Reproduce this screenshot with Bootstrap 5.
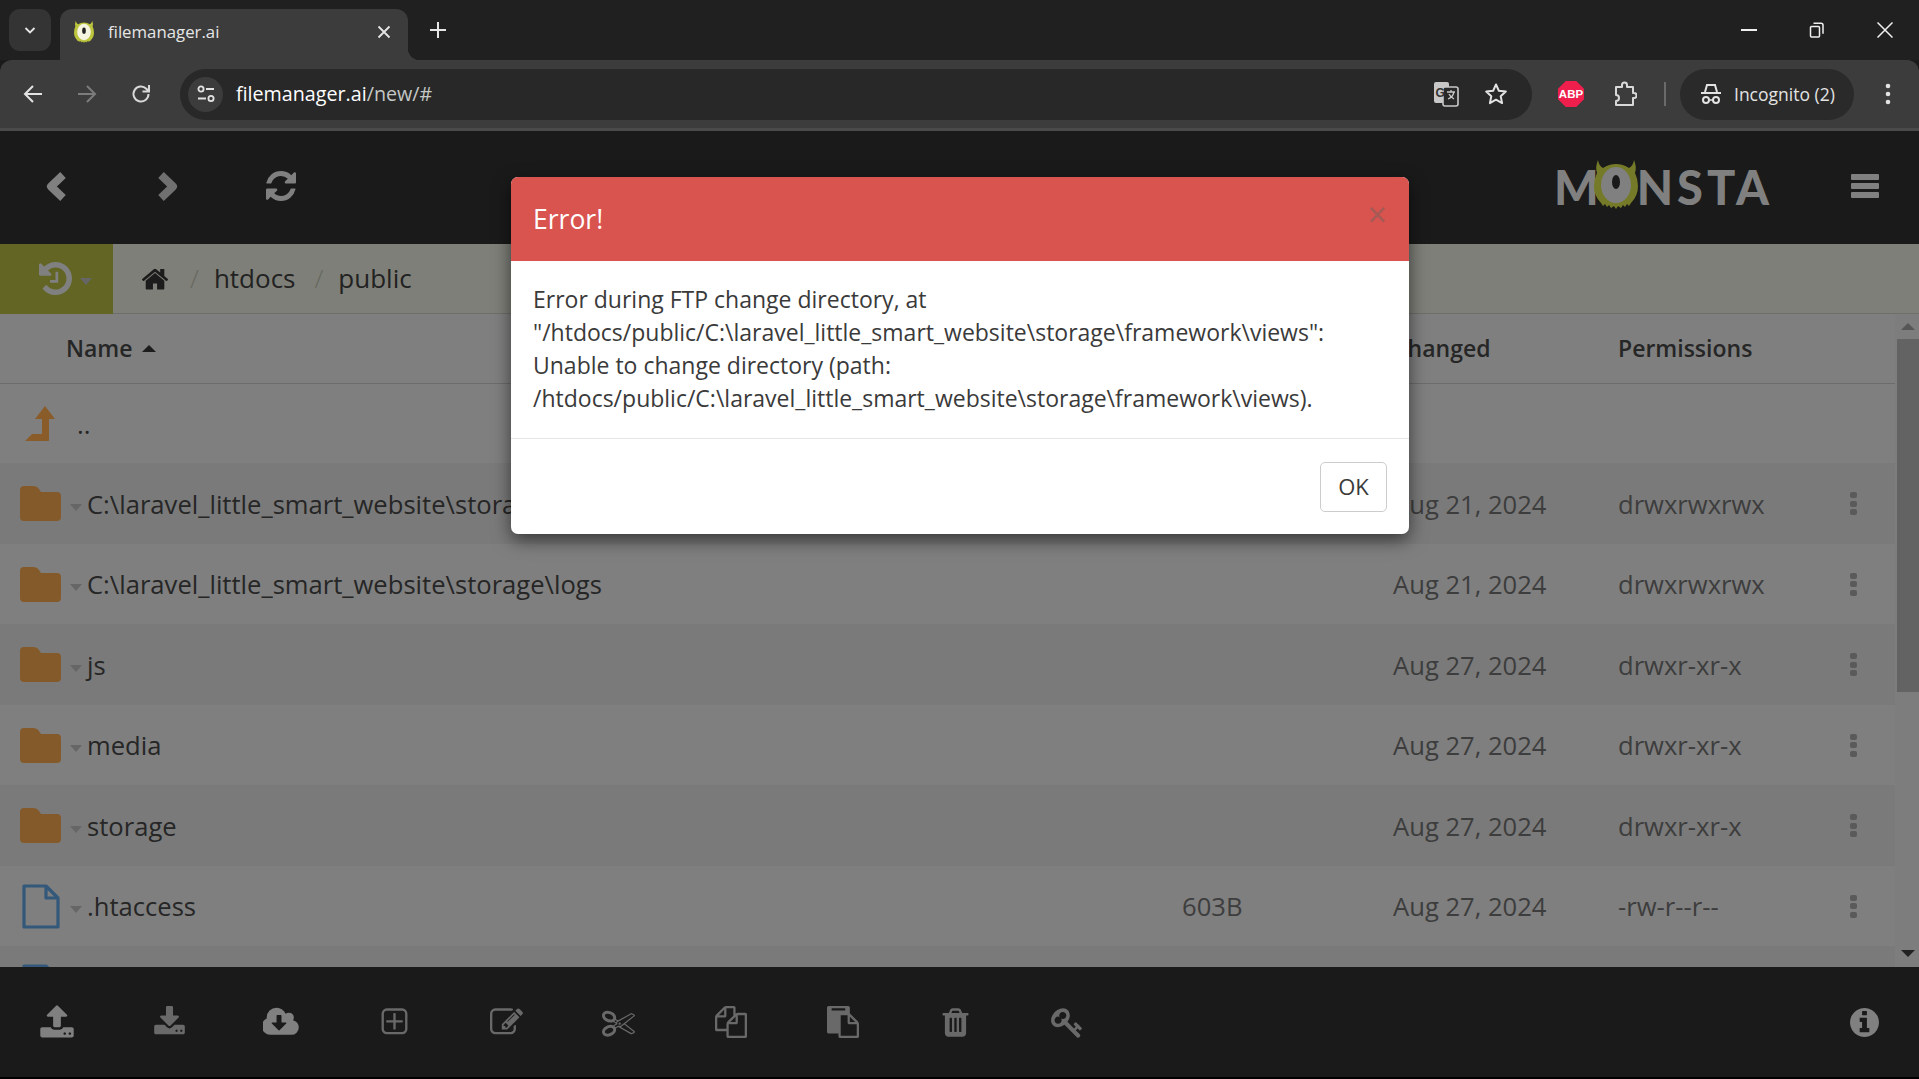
<!DOCTYPE html>
<html lang="en">

<head>
    <meta charset="utf-8">
    <title>filemanager.ai</title>
    <link href="https://cdn.jsdelivr.net/npm/bootstrap@5.3.2/dist/css/bootstrap.min.css" rel="stylesheet">
    <script src="https://cdn.jsdelivr.net/npm/bootstrap@5.3.2/dist/js/bootstrap.bundle.min.js"></script>

    <style>
        html, body { height: 100%; }
        body {
            height: 1079px;
            overflow: hidden;
            background: #1a1a1a;
            font-family: "Open Sans", "Liberation Sans", sans-serif;
        }
        svg { display: block; flex: none; }

        /* browser frame */
        .tab-strip { height: 60px; background: #202020; padding-left: 9px; color: #e6e6e6; }
        .tab-list { width: 42px; height: 42px; margin-top: 9px; border-radius: 11px; background: #343434; }
        .tab-item {
            position: relative;
            width: 348px; height: 51px;
            margin: 9px 0 0 9px;
            padding: 0 17px 6px 14px;
            background: #3c3c3c;
            border-radius: 12px 12px 0 0;
            font-size: 16.8px;
        }
        .tab-item::after {
            content: "";
            position: absolute;
            right: -12px; bottom: 0;
            width: 12px; height: 12px;
            background: radial-gradient(circle at 100% 0, #202020 12px, #3c3c3c 12.5px);
        }
        .tab-title { margin-left: 14px; }
        .tab-icon { color: #bcc53d; --eye-w: #f4f4e0; --eye-p: #222; }
        .tab-new { height: 42px; margin: 9px 0 0 22px; }
        .win-btn { width: 68px; height: 60px; }
        .tool-bar {
            height: 71px;
            background: #3c3c3c;
            border-bottom: 3px solid #4a4a4a;
            border-radius: 12px 12px 0 0;
            color: #e3e3e3;
        }
        .tool-first { margin-left: 6px; }
        .tool-btn { width: 54px; height: 51px; }
        .omni {
            width: 1352px; height: 51px;
            margin-left: 12px;
            background: #282828;
            border-radius: 26px;
            padding-left: 8px;
        }
        .omni-chip { width: 35px; height: 35px; border-radius: 50%; background: #3c3c3c; }
        .omni-url { margin-left: 13px; font-size: 19.7px; color: #fff; }
        .omni-url span { color: #c4c7c5; }
        .omni-end { margin-left: auto; padding-right: 24px; gap: 25px; }
        .abp-badge {
            width: 26px; height: 26px;
            margin-left: 26px;
            background: #ee1f4c;
            clip-path: polygon(30% 0, 70% 0, 100% 30%, 100% 70%, 70% 100%, 30% 100%, 0 70%, 0 30%);
            color: #fff;
            font: 700 11.5px "Liberation Sans", sans-serif;
        }
        .puzzle-btn { margin-left: 29px; }
        .bar-sep { width: 2px; height: 24px; margin: 0 14px 0 27px; background: #6a6a6a; }
        .incog-pill {
            width: 174px; height: 51px;
            padding-left: 20px;
            gap: 12px;
            background: #2a2a2a;
            border-radius: 26px;
            font-size: 17.5px;
            white-space: nowrap;
        }
        .more-btn { padding-right: 28px; }

        /* app */
        .app-main { height: 948px; }
        .app-top { height: 113px; background: #1a1a1a; color: #808080; flex: none; }
        .app-btn { width: 112.3px; margin-top: -3px; }
        .logo-box { margin-right: 78px; color: #808080; }
        .logo-text { font: 900 47px/1 "Lato", sans-serif; letter-spacing: 1px; }
        .logo-rest { letter-spacing: 4px; }
        .logo-eye { margin: -6px -1px 0 -6px; color: #757a28; --eye-w: #808080; --eye-p: #1a1a1a; }
        .menu-bars { width: 28px; margin-right: 40px; }
        .menu-bars i { display: block; height: 6px; margin-bottom: 3px; background: #808080; border-radius: 1px; }
        .crumb-bar {
            height: 70px;
            flex: none;
            background: #7e7f78;
            border-bottom: 1px solid #6e6f6a;
            font-size: 26px;
            color: #222;
        }
        .crumb-hist { width: 113px; height: 70px; background: #626524; padding-left: 39px; gap: 8px; color: #808080; }
        .hist-caret { border-top-color: #808080; }
        .crumb-sep { color: #676860; margin: 0 15px 0 19px; font-weight: 300; }
        .crumb-home { margin-left: 29px; margin-right: 3px; color: #1c1c1c; }

        .list-wrap { min-height: 0; background: #7f7f7f; }
        .file-pane { width: 1895px; overflow: hidden; color: #3d3d3d; font-size: 25.6px; }
        .list-cols {
            display: grid;
            grid-template-columns: 1182px 211px 225px 222px 26px;
            align-items: center;
        }
        .list-head { height: 70px; border-bottom: 1px solid #6c6c6c; color: #262626; font-size: 23px; font-weight: 600; flex: none; }
        .head-name { padding-left: 66px; }
        .file-row { height: 80.5px; flex: none; padding-top: 3px; }
        .file-row.shade { background: #7a7a7a; }
        .parent-row { height: 79px; }
        .name-cell { display: flex; align-items: center; min-width: 0; white-space: nowrap; color: #262626; }
        .name-icon { width: 70px; padding-left: 20px; margin-top: -2px; flex: none; }
        .name-icon.for-file { padding-left: 22px; }
        .name-icon.for-up { padding-left: 25px; }
        .up-dots { margin-left: 7px; }
        .drop-caret { width: 0; height: 0; border: 6px solid transparent; border-top: 7px solid #666; border-bottom: 0; margin: 5px 5px 0 0; flex: none; }
        .sort-caret { width: 0; height: 0; border: 7px solid transparent; border-bottom: 7px solid #1d1d1d; border-top: 0; margin-left: 9px; }
        .dot-col { width: 7px; margin: 0 auto; }
        .dot-col i { display: block; height: 6px; margin-bottom: 2.5px; background: #5a5a5a; border-radius: 2px; }
        .scroll-track { width: 24px; background: #7d7d7d; padding-left: 2px; }
        .scroll-arrow { width: 0; height: 0; border: 7px solid transparent; margin: 0 auto; }
        .scroll-arrow.up { border-bottom: 7px solid #565656; border-top: 0; margin-top: 9px; }
        .scroll-arrow.down { border-top: 7px solid #222; border-bottom: 0; margin-bottom: 10px; }
        .scroll-thumb { height: 353px; margin-top: 9px; background: #636363; }

        .app-foot { height: 112px; flex: none; background: #1a1a1a; border-bottom: 2px solid #000; padding-left: 1px; }
        .foot-btn { width: 112.3px; height: 36px; color: #696969; }
        .foot-btn.lit { color: #808080; }
        .foot-info { margin-left: auto; width: 109px; color: #808080; }

        /* error dialog */
        .err-layer { position: absolute; inset: 0; z-index: 10; top: 46px; }
        .err-dialog {
            width: 898px;
            margin-left: 511px;
            background: #fff;
            border: 0;
            border-radius: 7px;
            box-shadow: 0 6px 18px rgba(0, 0, 0, .55);
            font-size: 23px;
            color: #3a3a3a;
        }
        .err-head {
            height: 84px;
            padding: 0 22px;
            background: #d9534f;
            color: #fff;
            border: 0;
            border-radius: 7px 7px 0 0;
        }
        .err-title { font-size: 26.5px; line-height: 1; margin: 0; }
        .err-close { margin: -10px 0 0 auto; color: #a55a56; font-size: 34px; line-height: 1; }
        .err-body { height: 177px; padding: 22px 22px; line-height: 33px; }
        .err-foot { height: 96px; padding: 0 22px; border-top: 1px solid #e5e5e5; }
        .err-ok {
            width: 67px; height: 50px;
            margin: 0;
            padding: 0;
            background: #fff;
            border: 1px solid #ccc;
            border-radius: 5px;
            color: #3a3a3a;
            font-size: 22px;
        }
    </style>
</head>

<body class="m-0">

    <svg width="0" height="0" class="position-absolute">
        <symbol id="i-refresh" viewBox="128 128 1536 1536"><path d="M1639 1056q0 5-1 7-64 268-268 434.5t-478 166.5q-146 0-282.5-55t-243.5-157l-129 129q-19 19-45 19t-45-19-19-45v-448q0-26 19-45t45-19h448q26 0 45 19t19 45-19 45l-137 137q71 66 161 102t187 36q134 0 250-65t186-179q11-17 53-117 8-23 30-23h192q13 0 22.5 9.5t9.5 22.5zm25-800v448q0 26-19 45t-45 19h-448q-26 0-45-19t-19-45 19-45l138-138q-148-137-349-137-134 0-250 65t-186 179q-11 17-53 117-8 23-30 23h-199q-13 0-22.5-9.5t-9.5-22.5v-7q65-268 270-434.5t480-166.5q146 0 284 55.5t245 156.5l130-129q19-19 45-19t45 19 19 45z" fill="currentColor"/></symbol>
        <symbol id="i-home" viewBox="90 200 1610 1360"><path d="M1472 992v480q0 26-19 45t-45 19h-384v-384h-256v384h-384q-26 0-45-19t-19-45v-480q0-1 .5-3t.5-3l575-474 575 474q1 2 1 6zm223-69l-62 74q-8 9-21 11h-3q-13 0-21-7l-692-577-692 577q-12 8-24 7-13-2-21-11l-62-74q-8-10-7-23.5t11-21.5l719-599q32-26 76-26t76 26l244 204v-195q0-14 9-23t23-9h192q14 0 23 9t9 23v408l219 182q10 8 11 21.5t-7 23.5z" fill="currentColor"/></symbol>
        <symbol id="i-history" viewBox="128 128 1536 1536"><path d="M1664 896q0 156-61 298t-164 245-245 164-298 61q-172 0-327-72.5t-264-204.5q-7-10-6.5-22.5t8.5-20.5l137-138q10-9 25-9 16 2 23 12 73 95 179 147t225 52q104 0 198.5-40.5t163.5-109.5 109.5-163.5 40.5-198.5-40.5-198.5-109.5-163.5-163.5-109.5-198.5-40.5q-98 0-188 35.5t-160 101.5l137 138q31 30 14 69-17 40-59 40h-448q-26 0-45-19t-19-45v-448q0-42 40-59 39-17 69 14l130 129q107-101 244.5-156.5t284.5-55.5q156 0 298 61t245 164 164 245 61 298zm-640-288v448q0 14-9 23t-23 9h-320q-14 0-23-9t-9-23v-64q0-14 9-23t23-9h224v-352q0-14 9-23t23-9h64q14 0 23 9t9 23z" fill="currentColor"/></symbol>
        <symbol id="i-upload" viewBox="0 0 1792 1792"><path d="M1344 1472q0-26-19-45t-45-19-45 19-19 45 19 45 45 19 45-19 19-45zm256 0q0-26-19-45t-45-19-45 19-19 45 19 45 45 19 45-19 19-45zm128-224v320q0 40-28 68t-68 28h-1472q-40 0-68-28t-28-68v-320q0-40 28-68t68-28h427q21 56 70.5 92t110.5 36h256q61 0 110.5-36t70.5-92h427q40 0 68 28t28 68zm-325-648q-17 40-59 40h-256v448q0 26-19 45t-45 19h-256q-26 0-45-19t-19-45v-448h-256q-42 0-59-40-17-39 14-69l448-448q18-19 45-19t45 19l448 448q31 30 14 69z" fill="currentColor"/></symbol>
        <symbol id="i-download" viewBox="0 0 1792 1792"><path d="M1344 1344q0-26-19-45t-45-19-45 19-19 45 19 45 45 19 45-19 19-45zm256 0q0-26-19-45t-45-19-45 19-19 45 19 45 45 19 45-19 19-45zm128-224v320q0 40-28 68t-68 28h-1472q-40 0-68-28t-28-68v-320q0-40 28-68t68-28h465l135 136q58 56 136 56t136-56l136-136h464q40 0 68 28t28 68zm-325-569q17 41-14 70l-448 448q-18 19-45 19t-45-19l-448-448q-31-29-14-70 17-39 59-39h256v-448q0-26 19-45t45-19h256q26 0 45 19t19 45v448h256q42 0 59 39z" fill="currentColor"/></symbol>
        <symbol id="i-cloud" viewBox="0 0 1920 1792"><path d="M1216 928q0-14-9-23t-23-9h-224v-352q0-13-9.5-22.5t-22.5-9.5h-192q-13 0-22.5 9.5t-9.5 22.5v352h-224q-13 0-22.5 9.5t-9.5 22.5q0 14 9 23l352 352q9 9 23 9t23-9l351-351q10-12 10-24zm640 224q0 159-112.5 271.5t-271.5 112.5h-1088q-185 0-316.5-131.5t-131.5-316.5q0-130 70-240t188-165q-2-30-2-43 0-212 150-362t362-150q156 0 285.5 87t188.5 231q71-62 166-62 106 0 181 75t75 181q0 76-41 138 130 31 213.5 135.5t83.5 238.5z" fill="currentColor"/></symbol>
        <symbol id="i-plus" viewBox="0 0 1792 1792"><path d="M1344 800v64q0 14-9 23t-23 9h-352v352q0 14-9 23t-23 9h-64q-14 0-23-9t-9-23v-352h-352q-14 0-23-9t-9-23v-64q0-14 9-23t23-9h352v-352q0-14 9-23t23-9h64q14 0 23 9t9 23v352h352q14 0 23 9t9 23zm128 448v-832q0-66-47-113t-113-47h-832q-66 0-113 47t-47 113v832q0 66 47 113t113 47h832q66 0 113-47t47-113zm128-832v832q0 119-84.5 203.5t-203.5 84.5h-832q-119 0-203.5-84.5t-84.5-203.5v-832q0-119 84.5-203.5t203.5-84.5h832q119 0 203.5 84.5t84.5 203.5z" fill="currentColor"/></symbol>
        <symbol id="i-edit" viewBox="0 0 1792 1792"><path d="M888 1184l116-116-152-152-116 116v56h96v96h56zm440-720q-16-16-33 1l-350 350q-17 17-1 33t33-1l350-350q17-17 1-33zm80 594v190q0 119-84.5 203.5t-203.5 84.5h-832q-119 0-203.5-84.5t-84.5-203.5v-832q0-119 84.5-203.5t203.5-84.5h832q63 0 117 25 15 7 18 23 3 17-9 29l-49 49q-14 14-32 8-23-6-45-6h-832q-66 0-113 47t-47 113v832q0 66 47 113t113 47h832q66 0 113-47t47-113v-126q0-13 9-22l64-64q15-15 35-7t20 29zm-96-738l288 288-672 672h-288v-288zm444 132l-92 92-288-288 92-92q28-28 68-28t68 28l152 152q28 28 28 68t-28 68z" fill="currentColor"/></symbol>
        <symbol id="i-cut" viewBox="0 0 1792 1792"><path d="M960 896q26 0 45 19t19 45-19 45-45 19-45-19-19-45 19-45 45-19zm300 64l507 398q28 20 25 56-5 35-35 51l-128 64q-13 7-29 7-17 0-31-8l-690-387-110 66q-8 4-12 5 14 49 10 97-7 77-56 147.5t-132 123.5q-132 84-277 84-136 0-222-78-90-84-79-207 7-76 56-147t131-124q132-84 278-84 83 0 151 31 9-13 22-22l122-73-122-73q-13-9-22-22-68 31-151 31-146 0-278-84-82-53-131-124t-56-147q-5-59 15.5-113t63.5-93q85-79 222-79 145 0 277 84 83 52 132 123t56 148q4 48-10 97 4 1 12 5l110 66 690-387q14-8 31-8 16 0 29 7l128 64q30 16 35 51 3 36-25 56zm-681-260q46-42 21-108t-106-117q-92-59-192-59-74 0-113 36-46 42-21 108t106 117q92 59 192 59 74 0 113-36zm-85 745q81-51 106-117t-21-108q-39-36-113-36-100 0-192 59-81 51-106 117t21 108q39 36 113 36 100 0 192-59zm178-613l96 58v-11q0-36 33-56l14-8-79-47-26 26q-3 3-10 11t-12 12q-2 2-4 3.5t-3 2.5zm224 224l96 32 736-576-128-64-768 431v113l-160 96 9 8q2 2 7 6 4 4 11 12t11 12l26 26zm704 416l128-64-520-408-177 138q-2 3-13 7z" fill="currentColor"/></symbol>
        <symbol id="i-copy" viewBox="0 0 1792 1792"><path d="M1696 384q40 0 68 28t28 68v1216q0 40-28 68t-68 28h-960q-40 0-68-28t-28-68v-288h-544q-40 0-68-28t-28-68v-672q0-40 20-88t48-76l408-408q28-28 76-48t88-20h416q40 0 68 28t28 68v328q68-40 128-40h416zm-544 213l-299 299h299v-299zm-640-384l-299 299h299v-299zm196 647l316-316v-416h-384v416q0 40-28 68t-68 28h-416v640h512v-256q0-40 20-88t48-76zm956 804v-1152h-384v416q0 40-28 68t-68 28h-416v640h896z" fill="currentColor"/></symbol>
        <symbol id="i-paste" viewBox="0 0 1792 1792"><path d="M768 1664h896v-640h-416q-40 0-68-28t-28-68v-416h-384v1152zm256-1440v-64q0-13-9.5-22.5t-22.5-9.5h-704q-13 0-22.5 9.5t-9.5 22.5v64q0 13 9.5 22.5t22.5 9.5h704q13 0 22.5-9.5t9.5-22.5zm256 672h299l-299-299v299zm512 128v672q0 40-28 68t-68 28h-960q-40 0-68-28t-28-68v-160h-544q-40 0-68-28t-28-68v-1344q0-40 28-68t68-28h1088q40 0 68 28t28 68v328q21 13 36 28l408 408q28 28 48 76t20 88z" fill="currentColor"/></symbol>
        <symbol id="i-trash" viewBox="0 0 1792 1792"><path d="M704 1376v-704q0-14-9-23t-23-9h-64q-14 0-23 9t-9 23v704q0 14 9 23t23 9h64q14 0 23-9t9-23zm256 0v-704q0-14-9-23t-23-9h-64q-14 0-23 9t-9 23v704q0 14 9 23t23 9h64q14 0 23-9t9-23zm256 0v-704q0-14-9-23t-23-9h-64q-14 0-23 9t-9 23v704q0 14 9 23t23 9h64q14 0 23-9t9-23zm-544-992h448l-48-117q-7-9-17-11h-317q-10 2-17 11zm928 32v64q0 14-9 23t-23 9h-96v948q0 83-47 143.5t-113 60.5h-832q-66 0-113-58.5t-47-141.5v-952h-96q-14 0-23-9t-9-23v-64q0-14 9-23t23-9h309l70-167q15-37 54-63t79-26h320q40 0 79 26t54 63l70 167h309q14 0 23 9t9 23z" fill="currentColor"/></symbol>
        <symbol id="i-key" viewBox="0 0 1792 1792"><path d="M832 512q0-80-56-136t-136-56-136 56-56 136q0 42 19 83-41-19-83-19-80 0-136 56t-56 136 56 136 136 56 136-56 56-136q0-42-19-83 41 19 83 19 80 0 136-56t56-136zm851 704q0 17-49 66t-66 49q-9 0-28.5-16t-36.5-33-38.5-40-24.5-26l-96 96 220 220q28 28 28 68 0 42-39 81t-81 39q-40 0-68-28l-671-671q-176 131-365 131-163 0-265.5-102.5t-102.5-265.5q0-160 95-313t248-248 313-95q163 0 265.5 102.5t102.5 265.5q0 189-131 365l355 355 96-96q-3-3-26-24.5t-40-38.5-33-36.5-16-28.5q0-17 49-66t66-49q13 0 23 10 6 6 46 44.5t82 79.5 86.5 86 73 78 28.5 41z" fill="currentColor"/></symbol>
        <symbol id="i-info" viewBox="128 128 1536 1536"><path d="M1152 1376v-160q0-14-9-23t-23-9h-96v-512q0-14-9-23t-23-9h-320q-14 0-23 9t-9 23v160q0 14 9 23t23 9h96v320h-96q-14 0-23 9t-9 23v160q0 14 9 23t23 9h448q14 0 23-9t9-23zm-128-896v-160q0-14-9-23t-23-9h-192q-14 0-23 9t-9 23v160q0 14 9 23t23 9h192q14 0 23-9t9-23zm640 416q0 209-103 385.5t-279.5 279.5-385.5 103-385.5-103-279.5-279.5-103-385.5 103-385.5 279.5-279.5 385.5-103 385.5 103 279.5 279.5 103 385.5z" fill="currentColor"/></symbol>
        <symbol id="i-folder" viewBox="0 0 41 35"><path d="M4 0h9q4 0 6 3l2 3h16q4 0 4 4v21q0 4-4 4H4q-4 0-4-4V4q0-4 4-4z" fill="#855a2a"/></symbol>
        <symbol id="i-file" viewBox="0 0 38 45"><path d="M2 2h22l12 12v29H2zM24 2v12h12" fill="none" stroke="#33587a" stroke-width="3.2" stroke-linejoin="round"/></symbol>
        <symbol id="i-up" viewBox="0 0 30 35"><path d="M20 0l10 13h-6v22H0l7-7h10V13h-7z" fill="#8a5c2a"/></symbol>
        <symbol id="i-eye" viewBox="0 0 44 50"><path d="M4 0q1 6 5 8 6-4 13-4t13 4q4-2 5-8 3 7 1 13 3 6 3 13 0 10-7 17l-2 3-2-2-2 3-2-2-2 3-3-2-2 3-2-3-3 2-2-3-2 2-2-3-2 2-2-3Q0 36 0 26q0-7 3-13-2-6 1-13z" fill="currentColor"/><ellipse cx="22" cy="25" rx="15" ry="18" fill="var(--eye-w)"/><ellipse cx="22" cy="22" rx="4" ry="7" fill="var(--eye-p)"/></symbol>
    </svg>

    <!-- browser frame -->
    <div class="tab-strip d-flex">
        <div class="tab-list d-flex align-items-center justify-content-center">
            <svg width="14" height="14" viewBox="0 0 14 14"><path d="M2.5 5L7 9.5 11.5 5" fill="none" stroke="#e6e6e6" stroke-width="1.8"/></svg>
        </div>
        <div class="tab-item d-flex align-items-center">
            <svg class="tab-icon" width="20" height="24"><use href="#i-eye"/></svg>
            <span class="tab-title">filemanager.ai</span>
            <svg class="ms-auto" width="14" height="14" viewBox="0 0 14 14"><path d="M1.5 1.5l11 11m0-11l-11 11" stroke="#e6e6e6" stroke-width="1.8"/></svg>
        </div>
        <div class="tab-new d-flex align-items-center">
            <svg width="16" height="16" viewBox="0 0 16 16"><path d="M8 0v16M0 8h16" stroke="#e6e6e6" stroke-width="2"/></svg>
        </div>
        <div class="d-flex ms-auto">
            <div class="win-btn d-flex align-items-center justify-content-center"><svg width="16" height="2"><rect width="16" height="2" fill="#f0f0f0"/></svg></div>
            <div class="win-btn d-flex align-items-center justify-content-center"><svg width="16" height="16" viewBox="0 0 16 16"><path d="M1.5 5.5a1 1 0 011-1h7a1 1 0 011 1v8.5a1 1 0 01-1 1h-7a1 1 0 01-1-1zM4.5 1.2h7.5a2 2 0 012 2v8.5" fill="none" stroke="#f0f0f0" stroke-width="1.5"/></svg></div>
            <div class="win-btn d-flex align-items-center justify-content-center"><svg width="16" height="16" viewBox="0 0 16 16"><path d="M.5.5l15 15m0-15l-15 15" stroke="#f0f0f0" stroke-width="1.5"/></svg></div>
        </div>
    </div>

    <div class="tool-bar d-flex align-items-center">
        <div class="tool-btn tool-first d-flex align-items-center justify-content-center">
            <svg width="20" height="20" viewBox="0 0 20 20"><path d="M19 10H2M10 2l-8 8 8 8" fill="none" stroke="#e3e3e3" stroke-width="2"/></svg>
        </div>
        <div class="tool-btn d-flex align-items-center justify-content-center">
            <svg width="20" height="20" viewBox="0 0 20 20"><path d="M1 10h17M10 2l8 8-8 8" fill="none" stroke="#7c7c7c" stroke-width="2"/></svg>
        </div>
        <div class="tool-btn d-flex align-items-center justify-content-center">
            <svg width="20" height="20" viewBox="0 0 20 20"><path d="M17.5 10a7.5 7.5 0 11-2.2-5.3L17.5 7M18 1v6.500h-6.500" fill="none" stroke="#d8d8d8" stroke-width="2"/></svg>
        </div>
        <div class="omni d-flex align-items-center">
            <div class="omni-chip d-flex align-items-center justify-content-center">
                <svg width="20" height="20" viewBox="0 0 20 20"><circle cx="5" cy="5" r="2.600" fill="none" stroke="#e3e3e3" stroke-width="1.800"/><path d="M10 5h8M2 14.500h8" stroke="#e3e3e3" stroke-width="1.800"/><circle cx="15" cy="14.500" r="2.600" fill="none" stroke="#e3e3e3" stroke-width="1.800"/></svg>
            </div>
            <div class="omni-url">filemanager.ai<span>/new/#</span></div>
            <div class="omni-end d-flex align-items-center">
                <svg width="26" height="26" viewBox="0 0 26 26">
                    <rect x="1" y="1" width="15" height="21" rx="2" fill="#c8c8c8"/>
                    <rect x="10" y="6" width="15" height="19" rx="2" fill="#282828" stroke="#c8c8c8" stroke-width="1.600"/>
                    <text x="2.500" y="16" font-family="Liberation Sans, sans-serif" font-weight="700" font-size="12" fill="#333">G</text>
                    <path d="M14 11h8M18 9v2M21 11c-1 4-3 6-6 7M16 13c1 2 3 4 5 5" fill="none" stroke="#c8c8c8" stroke-width="1.300"/>
                </svg>
                <svg width="24" height="24" viewBox="0 0 24 24"><path d="M12 2.500l2.900 6.300 6.900.8-5.100 4.700 1.400 6.800-6.100-3.400-6.100 3.400 1.400-6.800L2.200 9.600l6.900-.8z" fill="none" stroke="#e3e3e3" stroke-width="2" stroke-linejoin="round"/></svg>
            </div>
        </div>
        <div class="abp-badge d-flex align-items-center justify-content-center">ABP</div>
        <svg class="puzzle-btn" width="24" height="26" viewBox="0 0 24 26"><path d="M3 6h6V4a2.500 2.500 0 015 0v2h6v6h1a2.500 2.500 0 010 5h-1v7H3v-4a3 3 0 000-6z" fill="none" stroke="#d8d8d8" stroke-width="2" stroke-linejoin="round"/></svg>
        <div class="bar-sep"></div>
        <div class="incog-pill d-flex align-items-center">
            <svg width="22" height="22" viewBox="0 0 22 22"><path d="M5 9l2-7h8l2 7M1 10h20" fill="none" stroke="#e3e3e3" stroke-width="2"/><circle cx="6" cy="17" r="3" fill="none" stroke="#e3e3e3" stroke-width="2"/><circle cx="16" cy="17" r="3" fill="none" stroke="#e3e3e3" stroke-width="2"/><path d="M9 17h4" stroke="#e3e3e3" stroke-width="1.500"/></svg>
            <span>Incognito (2)</span>
        </div>
        <div class="more-btn ms-auto">
            <svg width="6" height="22" viewBox="0 0 6 22"><circle cx="3" cy="3" r="2.300" fill="#e3e3e3"/><circle cx="3" cy="11" r="2.300" fill="#e3e3e3"/><circle cx="3" cy="19" r="2.300" fill="#e3e3e3"/></svg>
        </div>
    </div>

    <!-- file manager -->
    <div class="app-main position-relative d-flex flex-column">
        <div class="app-top d-flex align-items-center">
            <div class="app-btn d-flex justify-content-center"><svg width="22" height="31" viewBox="0 0 22 31"><path d="M18 4L6 15.500 18 27" fill="none" stroke="#808080" stroke-width="8" stroke-linejoin="round"/></svg></div>
            <div class="app-btn d-flex justify-content-center"><svg width="22" height="31" viewBox="0 0 22 31"><path d="M4 4l12 11.500L4 27" fill="none" stroke="#707070" stroke-width="8" stroke-linejoin="round"/></svg></div>
            <div class="app-btn d-flex justify-content-center"><svg width="30" height="30"><use href="#i-refresh"/></svg></div>
            <div class="logo-box d-flex align-items-center ms-auto">
                <span class="logo-text">M</span>
                <svg class="logo-eye" width="44" height="50"><use href="#i-eye"/></svg>
                <span class="logo-text logo-rest">NSTA</span>
            </div>
            <div class="menu-bars"><i></i><i></i><i></i></div>
        </div>

        <div class="crumb-bar d-flex align-items-center">
            <div class="crumb-hist d-flex align-items-center">
                <svg width="33" height="33"><use href="#i-history"/></svg>
                <div class="drop-caret hist-caret"></div>
            </div>
            <svg class="crumb-home" width="26" height="22"><use href="#i-home"/></svg>
            <span class="crumb-sep">/</span><span>htdocs</span>
            <span class="crumb-sep">/</span><span>public</span>
        </div>

        <div class="list-wrap d-flex flex-grow-1">
            <div class="file-pane d-flex flex-column" id="filePane">
                <div class="list-head list-cols">
                    <div class="head-name d-flex align-items-center">Name<span class="sort-caret"></span></div>
                    <div></div>
                    <div>Changed</div>
                    <div>Permissions</div>
                    <div></div>
                </div>
            </div>
            <div class="scroll-track d-flex flex-column">
                <div class="scroll-arrow up"></div>
                <div class="scroll-thumb"></div>
                <div class="scroll-arrow down mt-auto"></div>
            </div>
        </div>

        <div class="app-foot d-flex align-items-center" id="footBar"></div>

        <!-- error dialog -->
        <div class="err-layer">
            <div class="modal-content err-dialog">
                <div class="modal-header err-head d-flex align-items-center">
                    <h4 class="err-title">Error!</h4>
                    <span class="err-close">×</span>
                </div>
                <div class="modal-body err-body">
                    Error during FTP change directory, at<br>
                    "/htdocs/public/C:\laravel_little_smart_website\storage\framework\views":<br>
                    Unable to change directory (path:<br>
                    /htdocs/public/C:\laravel_little_smart_website\storage\framework\views).
                </div>
                <div class="modal-footer err-foot d-flex align-items-center justify-content-end">
                    <button type="button" class="btn err-ok">OK</button>
                </div>
            </div>
        </div>
    </div>

    <script>
        const files = [
            { icon: 'i-folder', name: 'C:\\laravel_little_smart_website\\storage\\framework\\views', size: '', date: 'Aug 21, 2024', perm: 'drwxrwxrwx' },
            { icon: 'i-folder', name: 'C:\\laravel_little_smart_website\\storage\\logs', size: '', date: 'Aug 21, 2024', perm: 'drwxrwxrwx' },
            { icon: 'i-folder', name: 'js', size: '', date: 'Aug 27, 2024', perm: 'drwxr-xr-x' },
            { icon: 'i-folder', name: 'media', size: '', date: 'Aug 27, 2024', perm: 'drwxr-xr-x' },
            { icon: 'i-folder', name: 'storage', size: '', date: 'Aug 27, 2024', perm: 'drwxr-xr-x' },
            { icon: 'i-file', name: '.htaccess', size: '603B', date: 'Aug 27, 2024', perm: '-rw-r--r--' },
        ]

        function iconBox(icon) {
            const size = icon === 'i-folder' ? 'width="41" height="35"' : 'width="38" height="45"'
            const cls = icon === 'i-file' ? 'for-file' : ''
            return `<div class="name-icon ${cls}"><svg ${size}><use href="#${icon}"/></svg></div>`
        }

        let rowsHtml = `
            <div class="file-row parent-row list-cols">
                <div class="name-cell">
                    <div class="name-icon for-up"><svg width="30" height="35"><use href="#i-up"/></svg></div>
                    <span class="up-dots">..</span>
                </div>
            </div>`

        files.forEach((file, index) => {
            rowsHtml += `
            <div class="file-row list-cols ${index % 2 === 0 ? 'shade' : ''}">
                <div class="name-cell">
                    ${iconBox(file.icon)}
                    <span class="drop-caret"></span><span>${file.name}</span>
                </div>
                <div>${file.size}</div>
                <div>${file.date}</div>
                <div>${file.perm}</div>
                <div class="dot-col"><i></i><i></i><i></i></div>
            </div>`
        })

        rowsHtml += `
            <div class="file-row list-cols shade">
                <div class="name-cell">${iconBox('i-file')}</div>
            </div>`

        document.getElementById('filePane').insertAdjacentHTML('beforeend', rowsHtml)

        const footIcons = [
            ['i-upload', 36, 'lit'], ['i-download', 33, ''], ['i-cloud', 37, 'lit'], ['i-plus', 33, ''], ['i-edit', 33, ''],
            ['i-cut', 33, ''], ['i-copy', 32, ''], ['i-paste', 32, ''], ['i-trash', 33, ''], ['i-key', 33, '']
        ]
        let footHtml = ''
        footIcons.forEach(item => {
            footHtml += `<div class="foot-btn d-flex align-items-center justify-content-center ${item[2]}"><svg width="${item[1]}" height="${item[1]}"><use href="#${item[0]}"/></svg></div>`
        })
        footHtml += `<div class="foot-info d-flex justify-content-center"><svg width="29" height="29"><use href="#i-info"/></svg></div>`
        document.getElementById('footBar').innerHTML = footHtml
    </script>
</body>

</html>
